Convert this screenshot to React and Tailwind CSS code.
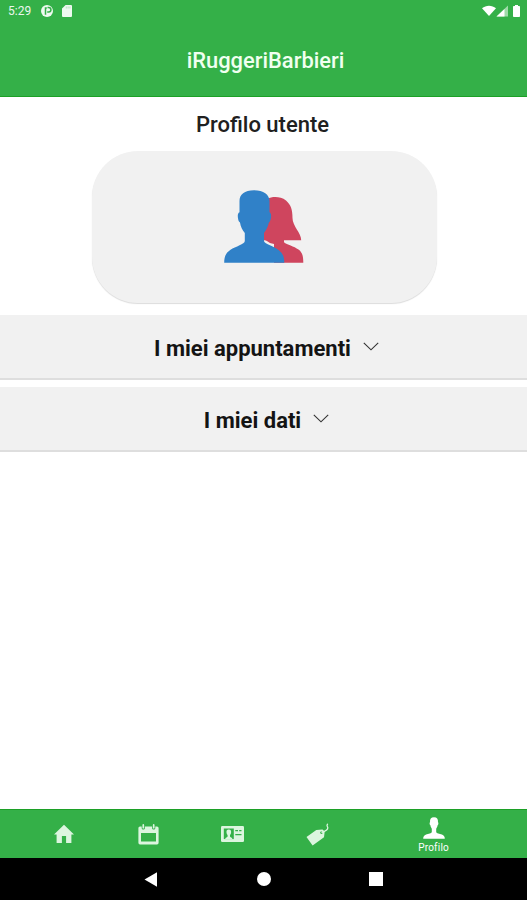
import { useState } from "react";

function StatusBar() {
  return (
    <div className="flex h-[22px] items-center justify-between pl-2 pr-[5px] text-white">
      <div className="flex items-center">
        <span className="w-[33px] text-[12px] leading-none opacity-90">5:29</span>
        <svg className="h-3 w-3" viewBox="0 0 12 12">
          <circle cx="6" cy="6" r="6" fill="#eefaf0" />
          <path d="M4.500 9.800V3h1.300M6.500 2.500h1.200a1.900 1.900 0 0 1 0 4.500H6.200" fill="none" stroke="#34b048" strokeWidth="1.500" />
        </svg>
        <svg className="ml-[9px] h-3 w-[10px]" viewBox="0 0 10 12">
          <path d="M3.600 0H9a1 1 0 0 1 1 1v10a1 1 0 0 1-1 1H1a1 1 0 0 1-1-1V3.600z" fill="#eefaf0" />
          <path d="M4.300 1.500v2M6.100 1.500v2M7.900 1.500v2" stroke="#a9dfb2" strokeWidth=".8" />
        </svg>
      </div>
      <svg className="h-[14px] w-10" viewBox="0 0 40 14">
        <path d="M0 4.300C4 .9 10 .9 14 4.300L7 12z" fill="#fff" />
        <path d="M14.500 12.500 26 1.500v11z" fill="#9fdba9" />
        <path d="M14.500 12.500 22.500 5v7.500z" fill="#fff" />
        <path d="M33 2V1h3v1h1.200c.5 0 .8.3.8.8v9.400c0 .5-.3.8-.8.8h-5.400c-.5 0-.8-.3-.8-.8V2.800c0-.5.3-.8.8-.8z" fill="#fff" />
      </svg>
    </div>
  );
}

function Chevron({ open }) {
  return (
    <svg className={open ? "h-[9px] w-4 rotate-180" : "h-[9px] w-4"} viewBox="0 0 16 9" fill="none">
      <path d="M.8.8 8 7.800 15.200.8" stroke="#333" strokeWidth="1.150" />
    </svg>
  );
}

function Section({ title }) {
  const [open, setOpen] = useState(false);
  return (
    <button
      type="button"
      onClick={() => setOpen(!open)}
      className="flex h-[65px] w-full items-center justify-center gap-3 border-b-2 border-[#dedede] bg-[#f1f1f1] pl-[6px]"
    >
      <span className="pt-[4px] text-[22px] font-bold leading-none text-[#141414]">{title}</span>
      <Chevron open={open} />
    </button>
  );
}

function Avatar() {
  return (
    <svg className="mb-px mr-px h-[73px] w-20" viewBox="0 0 80 73">
      {/* Donna */}
      <path
        d="M44 8.500C47 6.800 56 5.500 62 10.500c5 4.200 6.500 9.500 6.500 17.500 0 8 8.700 15 8.700 22.200H60v2c3 2.500 10 4 14.500 7.300 4 3 4.800 7 4.800 13.300H50V54l-12-3V40z"
        fill="#cf455e"
      />
      <path d="M39 50.500c2-.8 5 .2 7 3.500l-1 2-6-2z" fill="#f1f1f1" />
      {/* Uomo */}
      <path
        d="M30 .2c9.500 0 15.500 4.300 15.500 11v11c1.800.8 1.800 3.500 1.400 6-.4 2.500-1.200 3.500-2 4.300-.9 4.500-2.700 7.500-4.900 10.500v8c0 2.500 9.500 5 14.500 9 4.500 3.500 5.800 7 5.800 12.800H.2c0-6 1.500-9.800 6.300-13 5-3.400 14.300-5.500 14.300-8.800v-8c-2.400-3-4.200-6-4.800-10.500-1.200-.8-1.700-2-2-4.300-.4-2.500-.4-5.200 1.500-6v-11C15.500 4.200 20.500.2 30 .2z"
        fill="#3081c8"
      />
    </svg>
  );
}

function HomeIcon() {
  return (
    <svg className="h-5 w-5" viewBox="0 0 20 20">
      <path d="M10 .8 20 10.600h-2.600V19h-5.300v-7H7.900v7H2.600v-8.400H0z" fill="#dcf5df" />
    </svg>
  );
}

function CalendarIcon() {
  return (
    <svg className="h-[21px] w-[21px]" viewBox="0 0 21 21">
      <path
        fillRule="evenodd"
        d="M2 2.500h1.700V4c0 2 3.200 2 3.200 0V2.500h7.200V4c0 2 3.200 2 3.200 0V2.500H19a1.600 1.600 0 0 1 1.600 1.600v14.700a1.600 1.600 0 0 1-1.600 1.600H2A1.600 1.600 0 0 1 .4 18.800V4.100A1.600 1.600 0 0 1 2 2.500zM3 9v8.500h15V9z"
        fill="#dcf5df"
      />
      <path d="M5.300.9v2.800M15.700.9v2.800" stroke="#dcf5df" strokeWidth="1.700" strokeLinecap="round" />
    </svg>
  );
}

function CardIcon() {
  return (
    <svg className="h-4 w-[23px]" viewBox="0 0 23 16">
      <rect width="23" height="16" rx="1.200" fill="#dcf5df" />
      <path d="M2.800 2.500h10v10.600h-10z" fill="#34b048" />
      <path d="M7.800 3.500c1.800 0 2.500 1.200 2.300 3-.1 1.300-.5 1.900-1.100 2.600v1.500c0 .7 2.400.8 2.400 2.500H4.200c0-1.700 2.400-1.800 2.400-2.500V9.100c-.6-.7-1-1.300-1.100-2.600-.2-1.800.5-3 2.300-3z" fill="#dcf5df" />
      <path d="M14.300 4.600h2.700M18.200 4.600h2.300M14.300 8.600h6.200" stroke="#34b048" strokeWidth="1.100" />
    </svg>
  );
}

function TagIcon() {
  return (
    <svg className="h-[23px] w-[23px]" viewBox="0 0 23 23">
      <path
        fillRule="evenodd"
        d="M.5 14 10.300 6.900l6.200-.3 2.200 2-.7 5.600L6.600 22.400zM15.300 8.500a1.200 1.200 0 1 0 .1 2.400 1.200 1.200 0 0 0-.1-2.400z"
        fill="#dcf5df"
      />
      <path d="M16 9.500c3-1.200 6-2.700 5.800-4.700-.1-1.500-1.700-1.800-.3-3.600" fill="none" stroke="#dcf5df" strokeWidth="1.300" strokeLinecap="round" />
    </svg>
  );
}

function PersonIcon() {
  return (
    <svg className="h-[22px] w-[22px]" viewBox="0 0 22 22">
      <path
        d="M11 .2c3 0 4.200 1.700 4 5 .7.400.4 2.600-.4 3.100-.3 1.700-.9 2.600-1.400 3.400v3.200c0 1.300 3.500 1.700 5.700 2.700 2.100 1 2.900 2.200 2.900 4.200H.2c0-2 .8-3.200 2.900-4.200 2.200-1 5.700-1.400 5.700-2.700v-3.200c-.5-.8-1.100-1.700-1.400-3.400-.8-.5-1.100-2.700-.4-3.100-.2-3.300 1-5 4-5z"
        fill="#fff"
      />
    </svg>
  );
}

const tabs = [
  { id: "home", Icon: HomeIcon },
  { id: "calendario", Icon: CalendarIcon },
  { id: "tessera", Icon: CardIcon },
  { id: "offerte", Icon: TagIcon },
];

export default function App() {
  return (
    <div className="flex h-[900px] w-[527px] flex-col overflow-hidden bg-white font-[Roboto,sans-serif]">
      {/* Header */}
      <header className="h-[97px] border-b border-[#1ca026] bg-[#34b048]">
        <StatusBar />
        <h1 className="pl-[4px] pt-[27px] text-center text-[21.9px] font-medium leading-6 text-[#f0fff0]">iRuggeriBarbieri</h1>
      </header>

      {/* Contenuto */}
      <main className="flex flex-1 flex-col">
        <h2 className="pr-[2px] pt-4 text-center text-[22px] font-medium leading-6 text-[#202020]">Profilo utente</h2>
        <div className="ml-[92px] mt-[14px] flex h-[152px] w-[345px] items-center justify-center rounded-[46px] bg-[#f1f1f1] shadow-[0_1px_1px_#dcdcdc]">
          <Avatar />
        </div>
        <div className="mt-3 flex flex-col gap-[7px]">
          <Section title="I miei appuntamenti" />
          <Section title="I miei dati" />
        </div>
      </main>

      {/* Tab bar */}
      <nav className="flex h-[49px] border-t border-[#1ca026] bg-[#34b048] pl-[22px]">
        {tabs.map(({ id, Icon }) => (
          <button key={id} type="button" aria-label={id} className="flex w-[84.4px] items-center justify-center">
            <Icon />
          </button>
        ))}
        <button type="button" className="flex w-[148px] flex-col items-center pt-[7px] text-white">
          <PersonIcon />
          <span className="mt-1 text-[10px] leading-[10px] tracking-[0.2px]">Profilo</span>
        </button>
      </nav>

      {/* Barra di sistema */}
      <div className="flex h-[42px] items-center bg-black pl-36">
        <svg className="h-[15px] w-[14px]" viewBox="0 0 14 15">
          <path d="M.5 7.500 13 .3v14.400z" fill="#fff" />
        </svg>
        <div className="ml-[99px] h-[14px] w-[14px] rounded-full bg-white" />
        <div className="ml-[98px] h-[14px] w-[14px] bg-white" />
      </div>
    </div>
  );
}
